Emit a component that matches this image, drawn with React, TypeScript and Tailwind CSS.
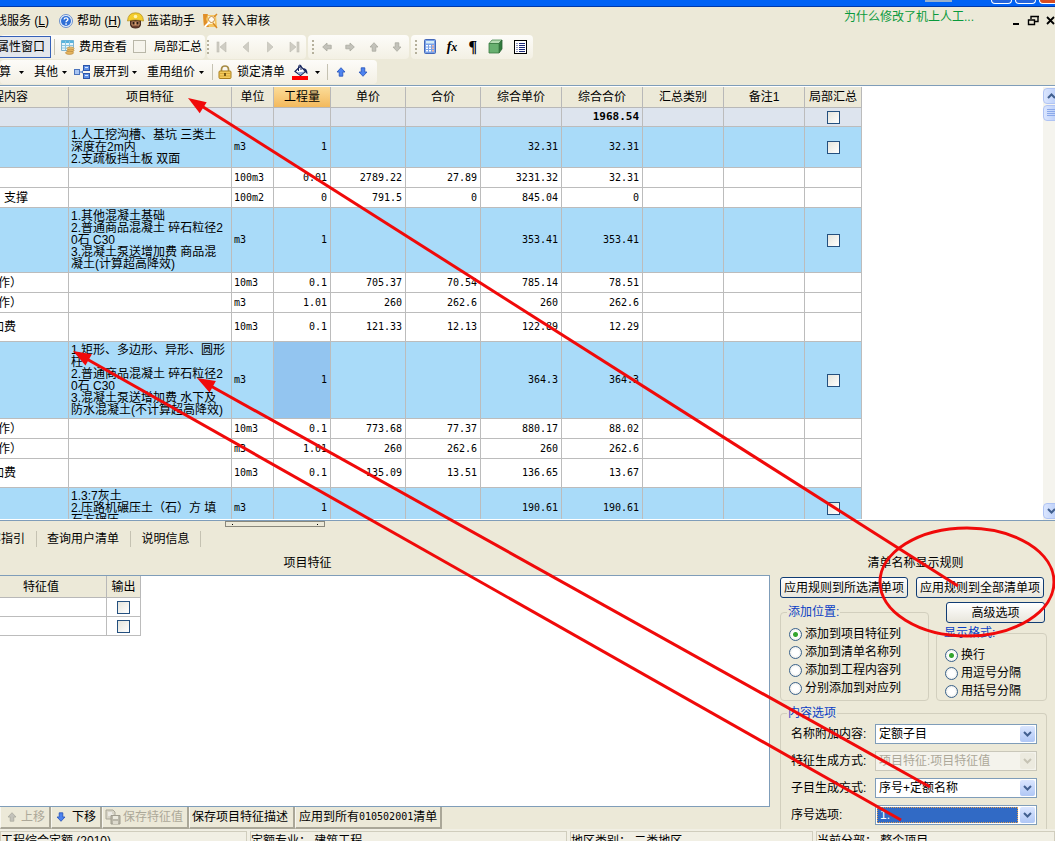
import React from "react";

type Row = {
  kind: "total" | "item" | "sub";
  height: string;
  content?: string;
  feature?: string[];
  unit?: string;
  qty?: string;
  price?: string;
  sum?: string;
  fullPrice?: string;
  fullSum?: string;
  active?: boolean;
};

const rows: Row[] = [
  { kind: "total", height: "h-[19px]", fullSum: "1968.54" },
  { kind: "item", height: "h-[41px]", feature: ["1.人工挖沟槽、基坑 三类土", "深度在2m内", "2.支疏板挡土板 双面"], unit: "m3", qty: "1", fullPrice: "32.31", fullSum: "32.31" },
  { kind: "sub", height: "h-[20px]", unit: "100m3", qty: "0.01", price: "2789.22", sum: "27.89", fullPrice: "3231.32", fullSum: "32.31" },
  { kind: "sub", height: "h-[20px]", content: "支撑", unit: "100m2", qty: "0", price: "791.5", sum: "0", fullPrice: "845.04", fullSum: "0" },
  { kind: "item", height: "h-[65px]", feature: ["1.其他混凝土基础", "2.普通商品混凝土 碎石粒径2", "0石 C30", "3.混凝土泵送增加费 商品混", "凝土(计算超高降效)"], unit: "m3", qty: "1", fullPrice: "353.41", fullSum: "353.41" },
  { kind: "sub", height: "h-[20px]", content: "作）", unit: "10m3", qty: "0.1", price: "705.37", sum: "70.54", fullPrice: "785.14", fullSum: "78.51" },
  { kind: "sub", height: "h-[20px]", content: "作）", unit: "m3", qty: "1.01", price: "260", sum: "262.6", fullPrice: "260", fullSum: "262.6" },
  { kind: "sub", height: "h-[29px]", content: "加费", unit: "10m3", qty: "0.1", price: "121.33", sum: "12.13", fullPrice: "122.89", fullSum: "12.29" },
  { kind: "item", height: "h-[77px]", feature: ["1.矩形、多边形、异形、圆形", "柱", "2.普通商品混凝土 碎石粒径2", "0石 C30", "3.混凝土泵送增加费 水下及", "防水混凝土(不计算超高降效)"], unit: "m3", qty: "1", fullPrice: "364.3", fullSum: "364.3", active: true },
  { kind: "sub", height: "h-[20px]", content: "作）", unit: "10m3", qty: "0.1", price: "773.68", sum: "77.37", fullPrice: "880.17", fullSum: "88.02" },
  { kind: "sub", height: "h-[20px]", content: "作）", unit: "m3", qty: "1.01", price: "260", sum: "262.6", fullPrice: "260", fullSum: "262.6" },
  { kind: "sub", height: "h-[29px]", content: "加费", unit: "10m3", qty: "0.1", price: "135.09", sum: "13.51", fullPrice: "136.65", fullSum: "13.67" },
  { kind: "item", height: "h-[41px]", feature: ["1.3:7灰土", "2.压路机碾压土（石）方 填", "石方碾压"], unit: "m3", qty: "1", fullPrice: "190.61", fullSum: "190.61" },
];

const headers = ["工程内容", "项目特征", "单位", "工程量", "单价", "合价", "综合单价", "综合合价", "汇总类别", "备注1", "局部汇总"];
const colWidths = ["w-[69px]", "w-[163px]", "w-[42px]", "w-[57px]", "w-[75px]", "w-[75px]", "w-[81px]", "w-[81px]", "w-[81px]", "w-[81px]", "w-[57px]"];
const rowBg = { total: "bg-[#dde4ee]", item: "bg-[#a9dbf9]", sub: "bg-white" };
const mono = "font-['DejaVu_Sans_Mono','Noto_Sans_CJK_SC',monospace]";
const band = "flex items-center rounded-sm bg-linear-to-b from-[#fdfcf9] to-[#f3f0e4]";

function Caret() {
  return (
    <svg width="5" height="3" viewBox="0 0 5 3" className="shrink-0">
      <path d="M0 0h5L2.500 3z" fill="#000" />
    </svg>
  );
}

function Grip() {
  return (
    <svg width="3" height="16" viewBox="0 0 3 16" className="shrink-0">
      {[1, 5, 9, 13].map((y) => (
        <rect key={y} x="0" y={y} width="2" height="2" fill="#b5b09c" />
      ))}
    </svg>
  );
}

function Separator({ className = "" }: { className?: string }) {
  return <span className={`h-4 w-px shrink-0 bg-[#c5c2b2] ${className}`} />;
}

function Arrow({ dir, color = "#c3c2ba", edge = "#aaa99f" }: { dir: "up" | "down" | "left" | "right"; color?: string; edge?: string }) {
  const turn = { up: 0, right: 90, down: 180, left: 270 }[dir];
  return (
    <svg width="10" height="10" viewBox="0 0 10 10" className="shrink-0">
      <path d="M5 .7 9 5H6.800v4.200H3.200V5H1z" fill={color} stroke={edge} strokeWidth=".8" transform={`rotate(${turn} 5 5)`} />
    </svg>
  );
}

function BlueArrow({ dir }: { dir: "up" | "down" }) {
  return <Arrow dir={dir} color="#4d83f0" edge="#2450b8" />;
}

function NavIcon({ dir, bar }: { dir: "left" | "right"; bar?: boolean }) {
  return (
    <svg width="12" height="12" viewBox="0 0 12 12" className="shrink-0">
      <g transform={dir === "right" ? "translate(12 0) scale(-1 1)" : undefined} fill="#cfcdc4" stroke="#bcbab0" strokeWidth=".6">
        {bar && <rect x="1" y="1" width="2" height="10" />}
        <path d={bar ? "M10 1v10L4 6z" : "M8.500 1v10L3 6z"} />
      </g>
    </svg>
  );
}

function HelpIcon() {
  return (
    <svg width="14" height="14" viewBox="0 0 14 14" className="shrink-0">
      <circle cx="7" cy="7" r="6.500" fill="#e9f1fc" stroke="#6b8fcb" />
      <circle cx="7" cy="7" r="5" fill="#2f6fd6" />
      <path d="M5.100 5.500C5.200 3.300 9 3.400 8.900 5.500 8.800 6.800 7.100 6.700 7 8.300" fill="none" stroke="#fff" strokeWidth="1.400" />
      <rect x="6.300" y="9.300" width="1.500" height="1.500" fill="#fff" />
    </svg>
  );
}

function HelperIcon() {
  return (
    <svg width="17" height="17" viewBox="0 0 17 17" className="shrink-0">
      <path d="M3 8h11v5q-1 3.500-5.500 3.500T3 13z" fill="#4a2e20" />
      <path d="M4.500 9.500h8v3q-.5 2.500-4 2.500t-4-2.500z" fill="#d39a6c" />
      <rect x="5.500" y="10" width="2" height="2.500" fill="#2a1a14" />
      <rect x="9.500" y="10" width="2" height="2.500" fill="#2a1a14" />
      <path d="M5 13.500h7l-1 2H6z" fill="#6b3f2e" />
      <path d="M.5 9Q1 .8 8.500.8T16.500 9Q8.500 6.500.5 9z" fill="#f4cd2c" stroke="#b08c18" strokeWidth=".7" />
      <circle cx="8.500" cy="4.500" r="1.800" fill="#fff4b0" />
    </svg>
  );
}

function AuditIcon() {
  return (
    <svg width="16" height="16" viewBox="0 0 16 16" className="shrink-0">
      <path d="M1 2h13l1 12H2z" fill="#f5c560" />
      <path d="M1 1h5L4 6l3 8H2z" fill="#e08f2a" />
      <path d="M6 3h7v8H6z" fill="#fff3cf" />
      <circle cx="9.500" cy="6.500" r="3" fill="#fffaf0" stroke="#c88a3a" />
      <path d="m7.500 9-5 5" stroke="#fff" strokeWidth="1.800" />
      <path d="m11 10 4 5M12 4l3-3" stroke="#d98a26" strokeWidth="1.500" />
    </svg>
  );
}

function FeeIcon() {
  return (
    <svg width="14" height="16" viewBox="0 0 14 16" className="shrink-0">
      <path d="M.5 1.500h12v10H.5z" fill="#e8f5fb" stroke="#7fb4d2" />
      <path d="M.5 1.500h12v2.500H.5z" fill="#58b4de" />
      <path d="M4.500 2v9M8.500 2v9M1 6.500h11M1 9h11" stroke="#8cc6e0" />
      <ellipse cx="9.500" cy="9.500" rx="3.500" ry="1.500" fill="#f0c878" stroke="#b98940" strokeWidth=".7" />
      <ellipse cx="9.500" cy="11.500" rx="3.500" ry="1.500" fill="#e6b45c" stroke="#b98940" strokeWidth=".7" />
      <ellipse cx="8.500" cy="13.800" rx="4" ry="1.600" fill="#e6b45c" stroke="#b98940" strokeWidth=".7" />
    </svg>
  );
}

function ExpandIcon() {
  return (
    <svg width="16" height="14" viewBox="0 0 16 14" className="shrink-0">
      <path d="M5 7h3M12 2 8 7l4 5" fill="none" stroke="#3d6fc4" />
      <rect x=".5" y="4.500" width="5" height="5" fill="#a9c5f2" stroke="#4d74bd" />
      <rect x="9.500" y=".5" width="6" height="5" fill="#5f90e6" stroke="#2c55a8" />
      <rect x="9.500" y="8.500" width="6" height="5" fill="#5f90e6" stroke="#2c55a8" />
      <path d="M11 2.500h3M11 10.500h3" stroke="#dce9ff" />
    </svg>
  );
}

function LockIcon() {
  return (
    <svg width="14" height="14" viewBox="0 0 14 14" className="shrink-0">
      <path d="M3.500 7V4Q3.700 1 7 1t3.500 3v3" fill="none" stroke="#a78c46" strokeWidth="1.700" />
      <rect x="1" y="6" width="12" height="7.500" rx="1" fill="#f2ca5c" stroke="#a87c1c" />
      <path d="M2 8.500h10M2 11h10" stroke="#dba93a" />
      <path d="M7 8v3" stroke="#5c430c" strokeWidth="1.600" />
    </svg>
  );
}

function FillIcon() {
  return (
    <svg width="17" height="16" viewBox="0 0 17 16" className="shrink-0">
      <path d="M3 7.500 8.500 2l5 5.500-5 4z" fill="#fff" stroke="#16245c" strokeWidth="1.200" />
      <path d="M6.500 7V2.500Q7 0 9 1.500V6" fill="none" stroke="#16245c" />
      <path d="M11 4q4.500 0 4.500 6-2-.5-2.500-3z" fill="#16245c" />
      <path d="m5 8.500 7.500-1-4 3.500z" fill="#8aa6d8" />
      <rect x="0" y="12" width="16" height="4" fill="#f00" />
    </svg>
  );
}

function CalculatorIcon() {
  return (
    <svg width="12" height="15" viewBox="0 0 12 15" className="shrink-0">
      <rect x=".5" y=".5" width="11" height="14" rx="1" fill="#7ba3e8" stroke="#4468b8" />
      <rect x="2" y="2" width="8" height="2.500" fill="#d6ecf6" />
      {[6, 8.5, 11].map((y) => [2, 5, 8].map((x) => <rect key={`${x}-${y}`} x={x} y={y} width="2" height="1.500" fill={x === 8 ? "#f4b8a0" : "#fff"} />))}
    </svg>
  );
}

function CubeIcon() {
  return (
    <svg width="15" height="15" viewBox="0 0 15 15" className="shrink-0">
      <path d="M1 4.500 4 1h10l-3 3.500z" fill="#b6dcb4" stroke="#4a8a50" strokeWidth=".8" />
      <path d="m11 4.500 3-3.500v9l-3 4z" fill="#2f7a3c" stroke="#2c6535" strokeWidth=".8" />
      <path d="M1 4.500h10V14H1z" fill="#68b070" stroke="#3a7a42" strokeWidth=".8" />
    </svg>
  );
}

function ListIcon() {
  return (
    <svg width="13" height="14" viewBox="0 0 13 14" className="shrink-0">
      <rect x=".5" y=".5" width="12" height="13" fill="#fff" stroke="#000" />
      <path d="M2.500 3.500h1M5 3.500h6M2.500 5.500h1M5 5.500h6M2.500 7.500h1M5 7.500h6M2.500 9.500h1M5 9.500h6M2.500 11.500h1M5 11.500h6" stroke="#1c2a78" />
    </svg>
  );
}

function SaveIcon() {
  return (
    <svg width="16" height="16" viewBox="0 0 16 16" className="shrink-0">
      <path d="M1 1h7l2 2v7H1z" fill="#d8d5c8" stroke="#aaa798" />
      <path d="M3 4h4M3 6h5" stroke="#fff" />
      <path d="M6 6.500h9V15H6z" fill="#bab7a9" stroke="#a09d8f" />
      <rect x="8" y="7" width="5" height="3" fill="#eceade" />
      <rect x="8" y="12" width="5" height="3" fill="#dedbce" />
    </svg>
  );
}

function Chevron({ up = false, color = "#42608f" }: { up?: boolean; color?: string }) {
  return (
    <svg width="9" height="6" viewBox="0 0 9 6">
      <path d={up ? "M1 5l3.500-3.500L8 5" : "M1 1l3.500 3.500L8 1"} fill="none" stroke={color} strokeWidth="2" />
    </svg>
  );
}

function Check({ label, muted = false }: { label: string; muted?: boolean }) {
  return (
    <input
      type="checkbox"
      aria-label={label}
      className={`block size-[13px] shrink-0 appearance-none border ${muted ? "size-3 border-[#b9b7a8] bg-[#f6f4ec]" : "border-[#24507f] bg-linear-to-br from-[#e4e4dc] to-white"}`}
    />
  );
}

function Radio({ name, label, checked = false }: { name: string; label: string; checked?: boolean }) {
  return (
    <label className="flex h-[18px] items-center gap-[3px] whitespace-nowrap">
      <input
        type="radio"
        name={name}
        defaultChecked={checked}
        className="size-[13px] shrink-0 appearance-none rounded-full border border-[#3a628c] bg-[radial-gradient(circle,#fff_40%,#dfdfd8)] checked:bg-[radial-gradient(circle,#35a52f_2px,#fff_3px,#e6e6e0)]"
      />
      {label}
    </label>
  );
}

function Field({ id, label, value, disabled = false, focused = false }: { id: string; label: string; value: string; disabled?: boolean; focused?: boolean }) {
  return (
    <div className="flex items-center">
      <label htmlFor={id} className="w-[84px] shrink-0">{label}</label>
      <div className={`flex h-5 w-[162px] border p-px ${disabled ? "border-[#c9c7ba] bg-[#f4f3ec]" : "border-[#7f9db9] bg-white"}`}>
        <select
          id={id}
          disabled={disabled}
          className={`min-w-0 flex-1 appearance-none px-0.5 opacity-100 outline-none ${focused ? "mr-0.5 border border-dotted border-[#e0a050] bg-[#316ac5] leading-[14px] text-white" : disabled ? "leading-4 text-[#aca899]" : "leading-4 text-black"}`}
        >
          <option>{value}</option>
        </select>
        <span className={`pointer-events-none flex w-[15px] items-center justify-center rounded-xs ${disabled ? "bg-[#eceadf]" : "bg-linear-to-b from-[#dbe6fe] to-[#b0c7f5]"}`}>
          <Chevron color={disabled ? "#c6c3b4" : "#42608f"} />
        </span>
      </div>
    </div>
  );
}

function Group({ title, children, className = "" }: { title: string; children: React.ReactNode; className?: string }) {
  return (
    <fieldset className={`min-w-0 rounded border border-[#d2cfbe] ${className}`}>
      <legend className="ml-1.5 px-px leading-3 text-[#0b3fc4]">{title}</legend>
      {children}
    </fieldset>
  );
}

const xpButton = "flex h-[21px] items-center justify-center whitespace-nowrap rounded-[3px] border border-[#103c74] bg-linear-to-b from-white to-[#e8e6dc]";
const barButton = "flex h-[22px] items-center whitespace-nowrap border-r-2 border-b-2 border-[#aaa798] border-l border-l-[#f8f7f0]";

function TopBars() {
  return (
    <header className="shrink-0">
      <div className="flex h-[7px] justify-end gap-[3px] overflow-hidden border-b border-[#0038a8] bg-[#0062f5]">
        <span className="mr-9 h-0.5 w-[27px] bg-[#9ab0cc]" />
        <span className="h-1 w-[21px] rounded-b-sm border border-t-0 border-white bg-[#2565dc]" />
        <span className="h-1 w-[21px] rounded-b-sm border border-t-0 border-white bg-[#2565dc]" />
        <span className="h-1 w-4 rounded-bl-sm border border-t-0 border-r-0 border-white bg-[#d94c20]" />
      </div>
      <nav className="flex h-[27px] items-center">
        <button className="-ml-[5px] w-16 text-left whitespace-nowrap">线服务 (<u>L</u>)</button>
        <button className="flex w-[68px] items-center gap-1 whitespace-nowrap"><HelpIcon /><span>帮助 (<u>H</u>)</span></button>
        <button className="flex w-[75px] items-center gap-[3px] whitespace-nowrap"><HelperIcon />蓝诺助手</button>
        <button className="flex items-center gap-1 whitespace-nowrap"><AuditIcon />转入审核</button>
        <a href="#tip" className="mr-[39px] mb-2 ml-auto text-[#0a9a3c]">为什么修改了机上人工...</a>
        <svg width="42" height="12" viewBox="0 0 42 12" className="shrink-0">
          <path d="M0 9h6" stroke="#000" strokeWidth="2" />
          <path d="M18 4V1.500h7v5h-3M15.500 5h6v4.500h-6zM15 5h7M18 1.500h8" fill="none" stroke="#000" strokeWidth="1.400" />
          <path d="m34 2 7 7M41 2l-7 7" stroke="#000" strokeWidth="1.800" />
        </svg>
      </nav>
      <div className="flex h-[25px] items-center gap-0.5">
        <div className={`h-6 w-[205px] ${band}`}>
          <button className="flex h-[22px] w-[51px] shrink-0 items-center justify-end border border-l-0 border-[#3560b8] bg-[#e3e6ec] pr-[5px] whitespace-nowrap">属性窗口</button>
          <Separator className="ml-[3px]" />
          <button className="ml-1.5 flex items-center gap-1 whitespace-nowrap"><FeeIcon />费用查看</button>
          <label className="ml-1.5 flex items-center gap-2 whitespace-nowrap"><Check label="局部汇总" muted />局部汇总</label>
        </div>
        <div className={`h-6 w-[99px] ${band}`}>
          <Grip />
          <div className="flex flex-1 items-center justify-around">
            <button aria-label="首条"><NavIcon dir="left" bar /></button>
            <button aria-label="上一条"><NavIcon dir="left" /></button>
            <button aria-label="下一条"><NavIcon dir="right" /></button>
            <button aria-label="末条"><NavIcon dir="right" bar /></button>
          </div>
        </div>
        <div className={`h-6 w-[101px] pl-1 ${band}`}>
          <Grip />
          <div className="flex flex-1 items-center justify-around">
            <button aria-label="左移"><Arrow dir="left" /></button>
            <button aria-label="右移"><Arrow dir="right" /></button>
            <button aria-label="升级"><Arrow dir="up" /></button>
            <button aria-label="降级"><Arrow dir="down" /></button>
          </div>
        </div>
        <div className={`h-6 w-[122px] pl-1 ${band}`}>
          <Grip />
          <div className="flex flex-1 items-center justify-around">
            <button aria-label="计算器"><CalculatorIcon /></button>
            <button className="font-['Liberation_Serif',serif] text-sm leading-4 font-bold italic">f<span className="text-xs">x</span></button>
            <button className="font-['Liberation_Serif',serif] text-base leading-4 font-bold">¶</button>
            <button aria-label="图元"><CubeIcon /></button>
            <button aria-label="列表"><ListIcon /></button>
          </div>
        </div>
      </div>
      <div className="flex h-[26px] items-center">
        <div className={`h-6 w-[377px] ${band}`}>
          <button className="-ml-px flex w-[35px] items-center gap-2">算 <Caret /></button>
          <button className="flex w-10 items-center gap-1 whitespace-nowrap">其他 <Caret /></button>
          <button className="flex w-[73px] items-center gap-[3px] whitespace-nowrap"><ExpandIcon />展开到 <Caret /></button>
          <button className="flex w-[65px] items-center gap-1 whitespace-nowrap">重用组价 <Caret /></button>
          <Separator />
          <button className="ml-[5px] flex w-[74px] items-center gap-[5px] whitespace-nowrap"><LockIcon />锁定清单</button>
          <button aria-label="填充颜色" className="flex w-[35px] items-center gap-1.5"><FillIcon /><Caret /></button>
          <Separator />
          <button aria-label="上移行" className="ml-2"><BlueArrow dir="up" /></button>
          <button aria-label="下移行" className="ml-3"><BlueArrow dir="down" /></button>
        </div>
      </div>
    </header>
  );
}

function CostTable() {
  return (
    <table className="w-[862px] table-fixed border-separate border-spacing-0">
      <colgroup>
        {colWidths.map((w, i) => <col key={i} className={w} />)}
      </colgroup>
      <thead>
        <tr className="h-[21px]">
          {headers.map((h, i) => (
            <th key={h} className={`overflow-hidden border-r border-b border-[#b8b8b8] p-0 font-normal whitespace-nowrap ${i === 3 ? "bg-linear-to-b from-[#fbdc98] to-[#f3b95c]" : "bg-[#ece9d8]"}`}>
              {i === 0 ? <span className="-ml-[60px] block">{h}</span> : h}
            </th>
          ))}
        </tr>
      </thead>
      <tbody>
        {rows.map((r, i) => (
          <tr key={i} className={`${r.height} ${rowBg[r.kind]} *:border-r *:border-b *:border-[#bcbcbc] *:p-0`}>
            <td className="overflow-hidden whitespace-nowrap">
              <span className={`block leading-3 ${r.content === "支撑" ? "ml-1" : r.content === "加费" ? "-ml-2" : "-ml-0.5"}`}>{r.content}</span>
            </td>
            <td className="overflow-hidden">
              <div className="pl-0.5 leading-3">
                {r.feature?.map((line, k) => <div key={k} className="whitespace-nowrap">{line}</div>)}
              </div>
            </td>
            <td><div className={`pl-0.5 text-[10px] leading-3 ${mono}`}>{r.unit}</div></td>
            {[r.qty, r.price, r.sum, r.fullPrice, r.fullSum].map((v, k) => (
              <td key={k} className={k === 0 && r.active ? "bg-[#93c5f0]" : ""}>
                <div className={`pr-[3px] text-right leading-3 ${mono} ${r.kind === "total" ? "text-[11px] font-bold" : "text-[10px]"}`}>{v}</div>
              </td>
            ))}
            <td />
            <td />
            <td>
              <div className="flex justify-center">{r.kind !== "sub" && <Check label={`局部汇总 ${i + 1}`} />}</div>
            </td>
          </tr>
        ))}
      </tbody>
    </table>
  );
}

function ScrollBar() {
  const part = "flex w-4 shrink-0 items-center justify-center rounded-sm border border-[#b0c4f4] bg-linear-to-r from-[#dbe6fe] to-[#b8ccf8]";
  return (
    <div className="flex w-3 shrink-0 flex-col gap-px overflow-hidden bg-[#f5f4ee] pt-px pb-px">
      <button aria-label="向上滚动" className={`h-4 ${part}`}><Chevron up /></button>
      <div className={`h-4 ${part}`}>
        <svg width="8" height="8" viewBox="0 0 8 8"><path d="M0 .5h8M0 2.500h8M0 4.500h8M0 6.500h8" stroke="#8ba9ea" /></svg>
      </div>
      <button aria-label="向下滚动" className={`mt-auto h-4 ${part}`}><Chevron /></button>
    </div>
  );
}

function FeaturePanel() {
  return (
    <section className="flex min-w-0 flex-1 flex-col">
      <h2 className="flex h-[25px] items-center justify-center pr-[155px]">项目特征</h2>
      <div className="flex-1 border-t border-r border-b border-[#7f9db9] bg-white">
        <table className="w-[141px] table-fixed border-separate border-spacing-0">
          <thead>
            <tr className="h-[22px] *:border-r *:border-b *:border-[#b8b8b8] *:bg-[#ece9d8] *:p-0 *:font-normal">
              <th className="w-[107px]"><span className="-ml-6">特征值</span></th>
              <th>输出</th>
            </tr>
          </thead>
          <tbody>
            {[1, 2].map((n) => (
              <tr key={n} className="h-[19px] *:border-r *:border-b *:border-[#bcbcbc] *:p-0">
                <td />
                <td><div className="flex justify-center"><Check label={`输出 ${n}`} /></div></td>
              </tr>
            ))}
          </tbody>
        </table>
      </div>
      <div className="flex h-[22px]">
        <button disabled className={`w-[51px] gap-1 pl-1.5 text-[#aca899] ${barButton}`}><Arrow dir="up" />上移</button>
        <button className={`w-[51px] gap-1.5 pl-1 ${barButton}`}><BlueArrow dir="down" />下移</button>
        <button disabled className={`w-[87px] gap-0.5 pl-0.5 text-[#aca899] ${barButton}`}><SaveIcon />保存特征值</button>
        <button className={`w-[106px] pl-0.5 ${barButton}`}>保存项目特征描述</button>
        <button className={`w-[147px] pl-[3px] ${barButton}`}>应用到所有<span className={`text-[10px] ${mono}`}>010502001</span>清单</button>
      </div>
    </section>
  );
}

function RulesPanel() {
  return (
    <section className="flex w-[285px] shrink-0 flex-col pr-2 pl-2.5">
      <h2 className="flex h-[25px] items-center justify-center pl-1">清单名称显示规则</h2>
      <div className="mt-0.5 flex justify-between pr-[3px]">
        <button className={`w-32 ${xpButton}`}>应用规则到所选清单项</button>
        <button className={`w-32 ${xpButton}`}>应用规则到全部清单项</button>
      </div>
      <div className="flex justify-between">
        <Group title="添加位置:" className="mt-2 h-[95px] w-[149px]">
          <div className="pt-[7px] pl-2">
            <Radio name="place" label="添加到项目特征列" checked />
            <Radio name="place" label="添加到清单名称列" />
            <Radio name="place" label="添加到工程内容列" />
            <Radio name="place" label="分别添加到对应列" />
          </div>
        </Group>
        <div className="flex w-[111px] flex-col">
          <button className={`mt-1 ml-2.5 w-[99px] ${xpButton}`}>高级选项</button>
          <Group title="显示格式:" className="mt-1 h-[74px]">
            <div className="pt-[7px] pl-2">
              <Radio name="format" label="换行" checked />
              <Radio name="format" label="用逗号分隔" />
              <Radio name="format" label="用括号分隔" />
            </div>
          </Group>
        </div>
      </div>
      <Group title="内容选项" className="mt-1.5 rounded-b-none border-b-0">
        <div className="flex flex-col gap-[7px] pt-[5px] pb-1 pl-2.5">
          <Field id="extra" label="名称附加内容:" value="定额子目" />
          <Field id="feature" label="特征生成方式:" value="项目特征:项目特征值" disabled />
          <Field id="child" label="子目生成方式:" value="序号+定额名称" />
          <Field id="serial" label="序号选项:" value="1." focused />
        </div>
      </Group>
    </section>
  );
}

function Annotations() {
  const lines = [
    { x1: 958, y1: 586, x2: 188, y2: 98 },
    { x1: 930, y1: 787, x2: 197, y2: 378 },
    { x1: 901, y1: 820, x2: 73, y2: 351 },
  ];
  return (
    <svg width="1055" height="841" viewBox="0 0 1055 841" className="pointer-events-none absolute top-0 left-0" stroke="#f00a0a" fill="#f00a0a">
      {lines.map((l) => {
        const angle = (Math.atan2(l.y2 - l.y1, l.x2 - l.x1) * 180) / Math.PI;
        return (
          <g key={l.x1}>
            <line x1={l.x1} y1={l.y1} x2={l.x2 + 12} y2={l.y2 + 7} strokeWidth="3" />
            <path d="M0 0-18-6.500V6.500z" stroke="none" transform={`translate(${l.x2} ${l.y2}) rotate(${angle})`} />
          </g>
        );
      })}
      <ellipse cx="967" cy="582" rx="87" ry="54" fill="none" strokeWidth="3" />
    </svg>
  );
}

export default function App() {
  return (
    <div className="relative flex h-screen flex-col overflow-hidden bg-[#ece9d8] font-['Liberation_Sans','Noto_Sans_CJK_SC',sans-serif] text-xs text-black">
      <TopBars />
      <main className="flex min-h-0 flex-1 border-t border-[#7f9db9] bg-white pt-px">
        <div className="mb-px min-w-0 flex-1 overflow-hidden"><CostTable /></div>
        <ScrollBar />
      </main>
      <div className="shrink-0 border-t border-[#7f9db9]">
        <div className="flex h-[7px] pl-[225px]">
          <div className="flex h-1.5 w-[100px] items-center justify-between border border-[#8a887c] px-1.5">
            <span className="size-px bg-black" />
            <span className="size-px bg-black" />
          </div>
        </div>
        <div className="flex h-[22px] items-center">
          <button className="-ml-[11px] w-[47px] text-left whitespace-nowrap">容指引</button>
          <Separator />
          <button className="w-[93px] pr-px">查询用户清单</button>
          <Separator />
          <button className="w-[69px]">说明信息</button>
          <Separator />
        </div>
      </div>
      <div className="flex shrink-0">
        <FeaturePanel />
        <RulesPanel />
      </div>
      <footer className="flex h-3 shrink-0 gap-[3px] overflow-hidden bg-[#f1efe4] pt-0.5 *:border *:border-b-0 *:border-[#d0cdbd] *:pt-px *:whitespace-nowrap">
        <div className="w-[247px]">工程综合定额 (2010)</div>
        <div className="w-[317px]">定额专业： 建筑工程</div>
        <div className="w-[243px]">地区类别： 二类地区</div>
        <div className="flex-1">当前分部： 整个项目</div>
      </footer>
      <Annotations />
    </div>
  );
}
